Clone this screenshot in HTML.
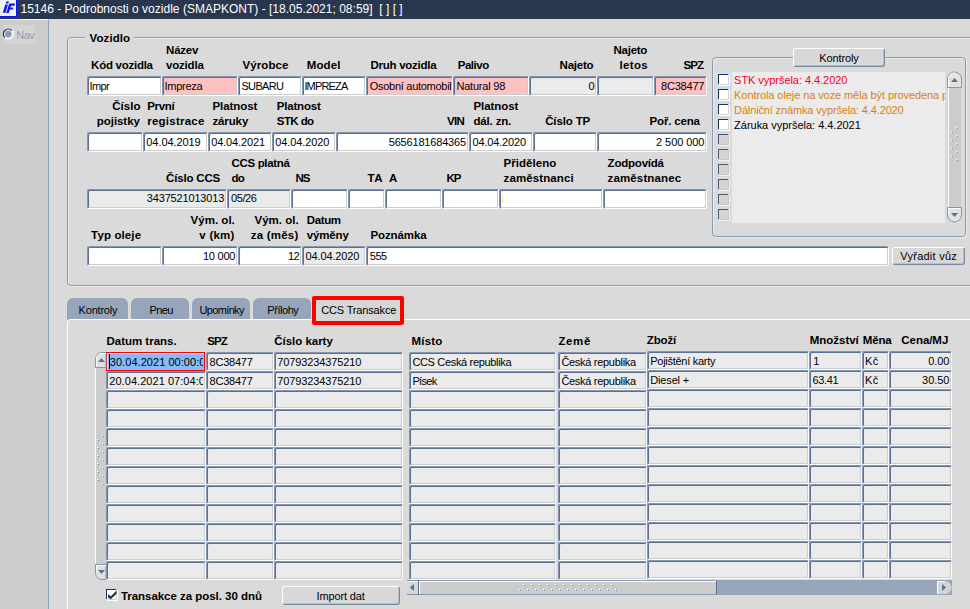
<!DOCTYPE html><html lang="cs"><head><meta charset="utf-8"><title>15146 - Podrobnosti o vozidle</title><style>
*{margin:0;padding:0;box-sizing:border-box}
html,body{width:970px;height:609px;overflow:hidden;background:#dadada;font-family:"Liberation Sans",Arial,sans-serif;font-size:11px;color:#000}
#root{position:relative;width:970px;height:609px;overflow:hidden;background:#dadada}
.abs{position:absolute}
#title{position:absolute;left:0;top:0;width:970px;height:19px;background:#29374e}
#left{position:absolute;left:0;top:19px;width:49px;height:590px;background:#cdcdcd;border-right:1px solid #8fa0ba;border-top:1px solid #f4f4f4}
.t{position:absolute;white-space:pre;height:14px;line-height:14px;font-size:11px}
.b{font-weight:bold;font-size:11.5px}
.w{color:#fff;font-size:12px}
.f,.c{position:absolute;height:20px;border:1px solid;border-color:#8496b2 #fff #fff #8496b2;border-radius:2px;background:#fff;box-shadow:inset 1px 1px 0 #5b7194,inset -1px -1px 0 #cdcdcd}
.g{background:#ebebeb}
.p{background:#ffc0c0}
.c{height:19px;background:#ebebeb}
.btn{position:absolute;border:1px solid;border-color:#fff #7788a4 #7788a4 #fff;border-radius:3px;background:#d8d8d8;box-shadow:inset -1px -1px 0 #b4bfd0}
.frame{position:absolute;border:1px solid #8c9bb5;border-radius:4px;box-shadow:inset 1px 1px 0 #ececec, 1px 1px 0 #ececec}
.tab{position:absolute;top:298px;height:22px;background:#97a5ba;border-radius:6px 6px 0 0}
.cb{position:absolute;width:12px;height:12px;background:linear-gradient(#22334f,#22334f) 0 0/10px 1px no-repeat,linear-gradient(#22334f,#22334f) 0 0/1px 10px no-repeat,linear-gradient(#d2d2d2,#d2d2d2) 10px 1px/1px 10px no-repeat,linear-gradient(#d2d2d2,#d2d2d2) 1px 10px/10px 1px no-repeat,linear-gradient(#fff,#fff) 1px 1px/9px 9px no-repeat,linear-gradient(#fff,#fff) 1px 1px/11px 11px no-repeat}
.cbg{background:linear-gradient(#4a5873,#4a5873) 0 0/10px 1px no-repeat,linear-gradient(#4a5873,#4a5873) 0 0/1px 10px no-repeat,linear-gradient(#c6c6c6,#c6c6c6) 10px 1px/1px 10px no-repeat,linear-gradient(#c6c6c6,#c6c6c6) 1px 10px/10px 1px no-repeat,linear-gradient(#d4d4d4,#d4d4d4) 1px 1px/9px 9px no-repeat,linear-gradient(#f2f2f2,#f2f2f2) 1px 1px/11px 11px no-repeat}
.clip{position:absolute;overflow:hidden}
</style></head><body><div id="root">
<div id="title"><svg class="abs" style="left:0;top:0" width="17" height="17" viewBox="0 0 17 17"><rect width="17" height="17" fill="#0a14f0"/><rect width="16" height="16" fill="#f2f2f2"/><path d="M6.300 1.500h2.600l-.6 2h-2.600z M5.300 4.600h2.600l-2.500 8.200h-2.600z M9.200 3.400h5.900l-.7 2.300h-3.400l-.55 1.800h3l-.65 2.100h-3l-1 3.300h-2.600z" fill="#0a14f0"/></svg></div>
<div id="left"></div>
<div class="abs" style="left:3px;top:25px;width:32px;height:19px;background:#d5d5d5"></div>
<svg class="abs" style="left:0;top:25px" width="20" height="20" viewBox="0 25 20 20"><circle cx="8.300" cy="34" r="5" fill="#dedede" stroke="#fff" stroke-width="1.200"/><path d="M4.760 37.540a5 5 0 0 1 7.080-7.080" fill="none" stroke="#29374e" stroke-width="1.200"/><circle cx="8.300" cy="34" r="3.200" fill="#8a9bb8"/></svg>
<div class="frame" style="left:67px;top:37px;width:910px;height:249px"></div>
<div class="abs" style="left:85px;top:35px;width:49px;height:6px;background:#dadada"></div>
<div class="f " style="left:87px;top:76px;width:75px"></div>
<div class="f p" style="left:162px;top:76px;width:76px"></div>
<div class="f " style="left:238px;top:76px;width:64px"></div>
<div class="f " style="left:302px;top:76px;width:64px"></div>
<div class="f p" style="left:366px;top:76px;width:87px"></div>
<div class="f p" style="left:453px;top:76px;width:76px"></div>
<div class="f g" style="left:529px;top:76px;width:68px"></div>
<div class="f g" style="left:597px;top:76px;width:57px"></div>
<div class="f p" style="left:654px;top:76px;width:53px"></div>
<div class="f " style="left:87px;top:132px;width:56px"></div>
<div class="f " style="left:143px;top:132px;width:65px"></div>
<div class="f " style="left:208px;top:132px;width:64px"></div>
<div class="f " style="left:272px;top:132px;width:64px"></div>
<div class="f " style="left:336px;top:132px;width:133px"></div>
<div class="f " style="left:469px;top:132px;width:64px"></div>
<div class="f " style="left:533px;top:132px;width:64px"></div>
<div class="f " style="left:597px;top:132px;width:110px"></div>
<div class="f g" style="left:87px;top:189px;width:140px"></div>
<div class="f g" style="left:227px;top:189px;width:64px"></div>
<div class="f " style="left:291px;top:189px;width:57px"></div>
<div class="f " style="left:348px;top:189px;width:37px"></div>
<div class="f " style="left:385px;top:189px;width:57px"></div>
<div class="f " style="left:442px;top:189px;width:57px"></div>
<div class="f " style="left:499px;top:189px;width:104px"></div>
<div class="f " style="left:603px;top:189px;width:104px"></div>
<div class="abs" style="left:502px;top:195px;width:1px;height:8px;background:#ffdc8c"></div>
<div class="f " style="left:87px;top:246px;width:75px"></div>
<div class="f " style="left:162px;top:246px;width:76px"></div>
<div class="f " style="left:238px;top:246px;width:64px"></div>
<div class="f g" style="left:302px;top:246px;width:64px"></div>
<div class="f " style="left:366px;top:246px;width:523px"></div>
<div class="btn" style="left:892px;top:247px;width:73px;height:18px"></div>
<div class="frame" style="left:712px;top:57px;width:254px;height:180px"></div>
<div class="btn" style="left:793px;top:48px;width:92px;height:19px"></div>
<div class="abs" style="left:732px;top:72px;width:213px;height:151px;background:#ebebeb"></div>
<div class="abs" style="left:717px;top:72px;width:15px;height:15px;background:#cfe0f6"></div>
<div class="cb " style="left:718px;top:74px"></div>
<div class="cb " style="left:718px;top:89px"></div>
<div class="cb " style="left:718px;top:104px"></div>
<div class="cb " style="left:718px;top:119px"></div>
<div class="cb cbg" style="left:718px;top:134px"></div>
<div class="cb cbg" style="left:718px;top:149px"></div>
<div class="cb cbg" style="left:718px;top:164px"></div>
<div class="cb cbg" style="left:718px;top:179px"></div>
<div class="cb cbg" style="left:718px;top:194px"></div>
<div class="cb cbg" style="left:718px;top:209px"></div>
<svg class="abs" style="left:0;top:0" width="970" height="609" viewBox="0 0 970 609"><rect x="947" y="79" width="14" height="136" fill="#cccccc"/><rect x="947" y="79" width="1" height="136" fill="#d2d2d2"/><rect x="948" y="79" width="1" height="136" fill="#fff"/><path d="M947.500 87.500V79a7 7 0 0 1 14 0v8.500z" fill="#e2e2e2" stroke="#8496b2"/><path d="M948.500 86.500V79a6 6 0 0 1 6-6" fill="none" stroke="#fff"/><path d="M951 82l3.500-4 3.500 4z" fill="#5b7194"/><path d="M947.500 207.500V215a7 7 0 0 0 14 0v-7.500z" fill="#e2e2e2" stroke="#8496b2"/><path d="M948.500 214V208.500h12" fill="none" stroke="#fff"/><path d="M951 213l3.500 4 3.500-4z" fill="#5b7194"/><rect x="956" y="127" width="1" height="1" fill="#fff"/><rect x="957" y="128" width="1" height="1" fill="#7c90b0"/><rect x="956" y="135" width="1" height="1" fill="#fff"/><rect x="957" y="136" width="1" height="1" fill="#7c90b0"/><rect x="956" y="143" width="1" height="1" fill="#fff"/><rect x="957" y="144" width="1" height="1" fill="#7c90b0"/><rect x="956" y="151" width="1" height="1" fill="#fff"/><rect x="957" y="152" width="1" height="1" fill="#7c90b0"/><rect x="956" y="159" width="1" height="1" fill="#fff"/><rect x="957" y="160" width="1" height="1" fill="#7c90b0"/><rect x="951" y="131" width="1" height="1" fill="#fff"/><rect x="952" y="132" width="1" height="1" fill="#7c90b0"/><rect x="951" y="139" width="1" height="1" fill="#fff"/><rect x="952" y="140" width="1" height="1" fill="#7c90b0"/><rect x="951" y="147" width="1" height="1" fill="#fff"/><rect x="952" y="148" width="1" height="1" fill="#7c90b0"/><rect x="951" y="155" width="1" height="1" fill="#fff"/><rect x="952" y="156" width="1" height="1" fill="#7c90b0"/></svg>
<div class="tab" style="left:67px;width:61px"></div>
<div class="tab" style="left:131px;width:58px"></div>
<div class="tab" style="left:192px;width:58px"></div>
<div class="tab" style="left:253px;width:58px"></div>
<div class="abs" style="left:67px;top:319px;width:910px;height:300px;border-top:1px solid #fff;border-left:1px solid #fff;border-radius:4px 0 0 0;background:#dadada"></div>
<div class="abs" style="left:312px;top:296px;width:92px;height:29px;background:#d6d6d6;border:4px solid #ff0000;border-radius:2px"></div>
<div class="abs" style="left:106px;top:352px;width:99px;height:19px;border:1px solid #ff0000;background:#86baf8;box-shadow:inset 1px 1px 0 #d5e8fb"></div>
<div class="abs" style="left:109px;top:354px;width:1px;height:15px;background:#000"></div>
<div class="c" style="left:206px;top:352px;width:68px"></div>
<div class="c" style="left:274px;top:352px;width:129px"></div>
<div class="c" style="left:409px;top:352px;width:147px"></div>
<div class="c" style="left:558px;top:352px;width:89px"></div>
<div class="c" style="left:647px;top:351px;width:162px"></div>
<div class="c" style="left:809px;top:351px;width:53px"></div>
<div class="c" style="left:862px;top:351px;width:27px"></div>
<div class="c" style="left:889px;top:351px;width:63px"></div>
<div class="c" style="left:106px;top:371px;width:100px"></div>
<div class="c" style="left:206px;top:371px;width:68px"></div>
<div class="c" style="left:274px;top:371px;width:129px"></div>
<div class="c" style="left:409px;top:371px;width:147px"></div>
<div class="c" style="left:558px;top:371px;width:89px"></div>
<div class="c" style="left:647px;top:370px;width:162px"></div>
<div class="c" style="left:809px;top:370px;width:53px"></div>
<div class="c" style="left:862px;top:370px;width:27px"></div>
<div class="c" style="left:889px;top:370px;width:63px"></div>
<div class="c" style="left:106px;top:390px;width:100px"></div>
<div class="c" style="left:206px;top:390px;width:68px"></div>
<div class="c" style="left:274px;top:390px;width:129px"></div>
<div class="c" style="left:409px;top:390px;width:147px"></div>
<div class="c" style="left:558px;top:390px;width:89px"></div>
<div class="c" style="left:647px;top:389px;width:162px"></div>
<div class="c" style="left:809px;top:389px;width:53px"></div>
<div class="c" style="left:862px;top:389px;width:27px"></div>
<div class="c" style="left:889px;top:389px;width:63px"></div>
<div class="c" style="left:106px;top:409px;width:100px"></div>
<div class="c" style="left:206px;top:409px;width:68px"></div>
<div class="c" style="left:274px;top:409px;width:129px"></div>
<div class="c" style="left:409px;top:409px;width:147px"></div>
<div class="c" style="left:558px;top:409px;width:89px"></div>
<div class="c" style="left:647px;top:408px;width:162px"></div>
<div class="c" style="left:809px;top:408px;width:53px"></div>
<div class="c" style="left:862px;top:408px;width:27px"></div>
<div class="c" style="left:889px;top:408px;width:63px"></div>
<div class="c" style="left:106px;top:428px;width:100px"></div>
<div class="c" style="left:206px;top:428px;width:68px"></div>
<div class="c" style="left:274px;top:428px;width:129px"></div>
<div class="c" style="left:409px;top:428px;width:147px"></div>
<div class="c" style="left:558px;top:428px;width:89px"></div>
<div class="c" style="left:647px;top:427px;width:162px"></div>
<div class="c" style="left:809px;top:427px;width:53px"></div>
<div class="c" style="left:862px;top:427px;width:27px"></div>
<div class="c" style="left:889px;top:427px;width:63px"></div>
<div class="c" style="left:106px;top:447px;width:100px"></div>
<div class="c" style="left:206px;top:447px;width:68px"></div>
<div class="c" style="left:274px;top:447px;width:129px"></div>
<div class="c" style="left:409px;top:447px;width:147px"></div>
<div class="c" style="left:558px;top:447px;width:89px"></div>
<div class="c" style="left:647px;top:446px;width:162px"></div>
<div class="c" style="left:809px;top:446px;width:53px"></div>
<div class="c" style="left:862px;top:446px;width:27px"></div>
<div class="c" style="left:889px;top:446px;width:63px"></div>
<div class="c" style="left:106px;top:466px;width:100px"></div>
<div class="c" style="left:206px;top:466px;width:68px"></div>
<div class="c" style="left:274px;top:466px;width:129px"></div>
<div class="c" style="left:409px;top:466px;width:147px"></div>
<div class="c" style="left:558px;top:466px;width:89px"></div>
<div class="c" style="left:647px;top:465px;width:162px"></div>
<div class="c" style="left:809px;top:465px;width:53px"></div>
<div class="c" style="left:862px;top:465px;width:27px"></div>
<div class="c" style="left:889px;top:465px;width:63px"></div>
<div class="c" style="left:106px;top:485px;width:100px"></div>
<div class="c" style="left:206px;top:485px;width:68px"></div>
<div class="c" style="left:274px;top:485px;width:129px"></div>
<div class="c" style="left:409px;top:485px;width:147px"></div>
<div class="c" style="left:558px;top:485px;width:89px"></div>
<div class="c" style="left:647px;top:484px;width:162px"></div>
<div class="c" style="left:809px;top:484px;width:53px"></div>
<div class="c" style="left:862px;top:484px;width:27px"></div>
<div class="c" style="left:889px;top:484px;width:63px"></div>
<div class="c" style="left:106px;top:504px;width:100px"></div>
<div class="c" style="left:206px;top:504px;width:68px"></div>
<div class="c" style="left:274px;top:504px;width:129px"></div>
<div class="c" style="left:409px;top:504px;width:147px"></div>
<div class="c" style="left:558px;top:504px;width:89px"></div>
<div class="c" style="left:647px;top:503px;width:162px"></div>
<div class="c" style="left:809px;top:503px;width:53px"></div>
<div class="c" style="left:862px;top:503px;width:27px"></div>
<div class="c" style="left:889px;top:503px;width:63px"></div>
<div class="c" style="left:106px;top:523px;width:100px"></div>
<div class="c" style="left:206px;top:523px;width:68px"></div>
<div class="c" style="left:274px;top:523px;width:129px"></div>
<div class="c" style="left:409px;top:523px;width:147px"></div>
<div class="c" style="left:558px;top:523px;width:89px"></div>
<div class="c" style="left:647px;top:522px;width:162px"></div>
<div class="c" style="left:809px;top:522px;width:53px"></div>
<div class="c" style="left:862px;top:522px;width:27px"></div>
<div class="c" style="left:889px;top:522px;width:63px"></div>
<div class="c" style="left:106px;top:542px;width:100px"></div>
<div class="c" style="left:206px;top:542px;width:68px"></div>
<div class="c" style="left:274px;top:542px;width:129px"></div>
<div class="c" style="left:409px;top:542px;width:147px"></div>
<div class="c" style="left:558px;top:542px;width:89px"></div>
<div class="c" style="left:647px;top:541px;width:162px"></div>
<div class="c" style="left:809px;top:541px;width:53px"></div>
<div class="c" style="left:862px;top:541px;width:27px"></div>
<div class="c" style="left:889px;top:541px;width:63px"></div>
<div class="c" style="left:106px;top:561px;width:100px"></div>
<div class="c" style="left:206px;top:561px;width:68px"></div>
<div class="c" style="left:274px;top:561px;width:129px"></div>
<div class="c" style="left:409px;top:561px;width:147px"></div>
<div class="c" style="left:558px;top:561px;width:89px"></div>
<div class="c" style="left:647px;top:560px;width:162px"></div>
<div class="c" style="left:809px;top:560px;width:53px"></div>
<div class="c" style="left:862px;top:560px;width:27px"></div>
<div class="c" style="left:889px;top:560px;width:63px"></div>
<svg class="abs" style="left:0;top:0" width="970" height="609" viewBox="0 0 970 609"><rect x="95" y="360" width="11" height="212" fill="#cccccc"/><rect x="95" y="360" width="1" height="212" fill="#fff"/><path d="M95.500 367.500V359a6.500 6.500 0 0 1 6.500-6.500h4v15z" fill="#e0e0e0" stroke="#8496b2"/><path d="M96.500 366.500V359a5.500 5.500 0 0 1 5.500-5.500h4" fill="none" stroke="#fff"/><path d="M98 362l3.500-4 3.500 4z" fill="#5b7194"/><path d="M95.500 564.500V573a6.500 6.500 0 0 0 6.500 6.500h4v-15z" fill="#e0e0e0" stroke="#8496b2"/><path d="M96.500 572V565.500h9.500" fill="none" stroke="#fff"/><path d="M98 570l3.500 4 3.500-4z" fill="#5b7194"/><rect x="407" y="580" width="545" height="15" fill="#96a5ba"/><rect x="407" y="580" width="11" height="15" fill="#d6d6d6"/><rect x="407" y="580" width="12" height="1" fill="#7d90ad"/><rect x="407" y="594" width="12" height="1" fill="#7d90ad"/><rect x="407" y="581" width="11" height="1" fill="#fff"/><rect x="418" y="580" width="1" height="15" fill="#5b7194"/><rect x="419" y="580" width="298" height="15" fill="#cccccc"/><rect x="419" y="580" width="298" height="1" fill="#8a9bb5"/><rect x="419" y="581" width="297" height="1" fill="#fff"/><rect x="419" y="582" width="1" height="12" fill="#fff"/><rect x="419" y="594" width="298" height="1" fill="#8497b3"/><rect x="716" y="581" width="1" height="13" fill="#5b7194"/><path d="M410 587.500l4-3.500v7z" fill="#54709a"/><path d="M937 581h8a6.500 6.500 0 0 1 0 13h-8z" fill="#d4d4d4"/><path d="M937.500 594v-12.500h7" fill="none" stroke="#fff"/><path d="M946 587.500l-4-3.500v7z" fill="#54709a"/><rect x="102" y="435" width="1" height="1" fill="#fff"/><rect x="103" y="436" width="1" height="1" fill="#7c90b0"/><rect x="102" y="443" width="1" height="1" fill="#fff"/><rect x="103" y="444" width="1" height="1" fill="#7c90b0"/><rect x="102" y="451" width="1" height="1" fill="#fff"/><rect x="103" y="452" width="1" height="1" fill="#7c90b0"/><rect x="102" y="459" width="1" height="1" fill="#fff"/><rect x="103" y="460" width="1" height="1" fill="#7c90b0"/><rect x="102" y="467" width="1" height="1" fill="#fff"/><rect x="103" y="468" width="1" height="1" fill="#7c90b0"/><rect x="102" y="475" width="1" height="1" fill="#fff"/><rect x="103" y="476" width="1" height="1" fill="#7c90b0"/><rect x="102" y="483" width="1" height="1" fill="#fff"/><rect x="103" y="484" width="1" height="1" fill="#7c90b0"/><rect x="97" y="439" width="1" height="1" fill="#fff"/><rect x="98" y="440" width="1" height="1" fill="#7c90b0"/><rect x="97" y="447" width="1" height="1" fill="#fff"/><rect x="98" y="448" width="1" height="1" fill="#7c90b0"/><rect x="97" y="455" width="1" height="1" fill="#fff"/><rect x="98" y="456" width="1" height="1" fill="#7c90b0"/><rect x="97" y="463" width="1" height="1" fill="#fff"/><rect x="98" y="464" width="1" height="1" fill="#7c90b0"/><rect x="97" y="471" width="1" height="1" fill="#fff"/><rect x="98" y="472" width="1" height="1" fill="#7c90b0"/><rect x="97" y="479" width="1" height="1" fill="#fff"/><rect x="98" y="480" width="1" height="1" fill="#7c90b0"/><rect x="523" y="584" width="1" height="1" fill="#fff"/><rect x="524" y="585" width="1" height="1" fill="#7c90b0"/><rect x="531" y="584" width="1" height="1" fill="#fff"/><rect x="532" y="585" width="1" height="1" fill="#7c90b0"/><rect x="539" y="584" width="1" height="1" fill="#fff"/><rect x="540" y="585" width="1" height="1" fill="#7c90b0"/><rect x="547" y="584" width="1" height="1" fill="#fff"/><rect x="548" y="585" width="1" height="1" fill="#7c90b0"/><rect x="555" y="584" width="1" height="1" fill="#fff"/><rect x="556" y="585" width="1" height="1" fill="#7c90b0"/><rect x="563" y="584" width="1" height="1" fill="#fff"/><rect x="564" y="585" width="1" height="1" fill="#7c90b0"/><rect x="571" y="584" width="1" height="1" fill="#fff"/><rect x="572" y="585" width="1" height="1" fill="#7c90b0"/><rect x="579" y="584" width="1" height="1" fill="#fff"/><rect x="580" y="585" width="1" height="1" fill="#7c90b0"/><rect x="587" y="584" width="1" height="1" fill="#fff"/><rect x="588" y="585" width="1" height="1" fill="#7c90b0"/><rect x="595" y="584" width="1" height="1" fill="#fff"/><rect x="596" y="585" width="1" height="1" fill="#7c90b0"/><rect x="603" y="584" width="1" height="1" fill="#fff"/><rect x="604" y="585" width="1" height="1" fill="#7c90b0"/><rect x="611" y="584" width="1" height="1" fill="#fff"/><rect x="612" y="585" width="1" height="1" fill="#7c90b0"/><rect x="519" y="589" width="1" height="1" fill="#fff"/><rect x="520" y="590" width="1" height="1" fill="#7c90b0"/><rect x="527" y="589" width="1" height="1" fill="#fff"/><rect x="528" y="590" width="1" height="1" fill="#7c90b0"/><rect x="535" y="589" width="1" height="1" fill="#fff"/><rect x="536" y="590" width="1" height="1" fill="#7c90b0"/><rect x="543" y="589" width="1" height="1" fill="#fff"/><rect x="544" y="590" width="1" height="1" fill="#7c90b0"/><rect x="551" y="589" width="1" height="1" fill="#fff"/><rect x="552" y="590" width="1" height="1" fill="#7c90b0"/><rect x="559" y="589" width="1" height="1" fill="#fff"/><rect x="560" y="590" width="1" height="1" fill="#7c90b0"/><rect x="567" y="589" width="1" height="1" fill="#fff"/><rect x="568" y="590" width="1" height="1" fill="#7c90b0"/><rect x="575" y="589" width="1" height="1" fill="#fff"/><rect x="576" y="590" width="1" height="1" fill="#7c90b0"/><rect x="583" y="589" width="1" height="1" fill="#fff"/><rect x="584" y="590" width="1" height="1" fill="#7c90b0"/><rect x="591" y="589" width="1" height="1" fill="#fff"/><rect x="592" y="590" width="1" height="1" fill="#7c90b0"/><rect x="599" y="589" width="1" height="1" fill="#fff"/><rect x="600" y="590" width="1" height="1" fill="#7c90b0"/><rect x="607" y="589" width="1" height="1" fill="#fff"/><rect x="608" y="590" width="1" height="1" fill="#7c90b0"/><rect x="615" y="589" width="1" height="1" fill="#fff"/><rect x="616" y="590" width="1" height="1" fill="#7c90b0"/></svg>
<div class="cb" style="left:106px;top:589px"></div>
<svg class="abs" style="left:100px;top:585px" width="24" height="20" viewBox="100 585 24 20"><path d="M108 594.300V597.400L110.800 599.300L116.600 593.800V590.600L110.800 596.200z" fill="#22334f"/></svg>
<div class="btn" style="left:282px;top:586px;width:118px;height:19px"></div>
<div class="t w" style="left:20.50px;top:1.84px;letter-spacing:0.009px">15146 - Podrobnosti o vozidle (SMAPKONT) - [18.05.2021; 08:59]  [ ] [ ]</div>
<div class="t" style="left:16.20px;top:28.19px;letter-spacing:-0.481px;color:#8a9bc0">Nav</div>
<div class="t b" style="left:89.60px;top:31.02px;letter-spacing:0.082px">Vozidlo</div>
<div class="t b" style="left:91.10px;top:58.02px;letter-spacing:-0.263px">Kód vozidla</div>
<div class="t b" style="left:166.10px;top:43.02px;letter-spacing:-0.262px">Název</div>
<div class="t b" style="left:166.10px;top:58.02px;letter-spacing:-0.214px">vozidla</div>
<div class="t b" style="left:242.60px;top:58.02px;letter-spacing:0.069px">Výrobce</div>
<div class="t b" style="left:306.70px;top:58.02px;letter-spacing:0.119px">Model</div>
<div class="t b" style="left:370.50px;top:58.02px;letter-spacing:-0.265px">Druh vozidla</div>
<div class="t b" style="left:457.70px;top:58.02px;letter-spacing:-0.470px">Palivo</div>
<div class="t b" style="left:559.60px;top:58.02px;letter-spacing:-0.224px">Najeto</div>
<div class="t b" style="left:613.60px;top:43.02px;letter-spacing:-0.284px">Najeto</div>
<div class="t b" style="left:619.50px;top:58.02px;letter-spacing:0.339px">letos</div>
<div class="t b" style="left:683.40px;top:58.02px;letter-spacing:-0.900px">SPZ</div>
<div class="t" style="left:89.50px;top:79.19px;letter-spacing:-0.646px">Impr</div>
<div class="t" style="left:164.40px;top:79.19px;letter-spacing:-0.236px">Impreza</div>
<div class="t" style="left:241.40px;top:79.19px;letter-spacing:-0.640px">SUBARU</div>
<div class="t" style="left:304.40px;top:79.19px;letter-spacing:-0.843px">IMPREZA</div>
<div class="t" style="left:456.40px;top:79.19px;letter-spacing:-0.193px">Natural 98</div>
<div class="t" style="left:588.60px;top:79.19px;letter-spacing:-0.500px">0</div>
<div class="t" style="left:661.10px;top:79.19px;letter-spacing:-0.222px">8C38477</div>
<div class="t b" style="left:112.20px;top:99.02px;letter-spacing:0.052px">Číslo</div>
<div class="t b" style="left:96.80px;top:114.02px;letter-spacing:-0.052px">pojistky</div>
<div class="t b" style="left:147.30px;top:99.02px;letter-spacing:-0.367px">První</div>
<div class="t b" style="left:147.30px;top:114.02px;letter-spacing:0.224px">registrace</div>
<div class="t b" style="left:212.40px;top:99.02px;letter-spacing:-0.048px">Platnost</div>
<div class="t b" style="left:212.40px;top:114.02px;letter-spacing:-0.108px">záruky</div>
<div class="t b" style="left:276.80px;top:99.02px;letter-spacing:-0.191px">Platnost</div>
<div class="t b" style="left:276.80px;top:114.02px;letter-spacing:-0.584px">STK do</div>
<div class="t b" style="left:446.90px;top:114.02px;letter-spacing:-0.583px">VIN</div>
<div class="t b" style="left:473.40px;top:99.02px;letter-spacing:-0.062px">Platnost</div>
<div class="t b" style="left:473.40px;top:114.02px;letter-spacing:-0.154px">dál. zn.</div>
<div class="t b" style="left:545.20px;top:114.02px;letter-spacing:-0.134px">Číslo TP</div>
<div class="t b" style="left:649.50px;top:114.02px;letter-spacing:-0.160px">Poř. cena</div>
<div class="t" style="left:146.30px;top:135.19px;letter-spacing:-0.071px">04.04.2019</div>
<div class="t" style="left:211.20px;top:135.19px;letter-spacing:-0.126px">04.04.2021</div>
<div class="t" style="left:275.30px;top:135.19px;letter-spacing:-0.115px">04.04.2020</div>
<div class="t" style="left:388.70px;top:135.19px;letter-spacing:-0.176px">5656181684365</div>
<div class="t" style="left:472.60px;top:135.19px;letter-spacing:-0.182px">04.04.2020</div>
<div class="t" style="left:656.10px;top:135.19px;letter-spacing:-0.077px">2 500 000</div>
<div class="t b" style="left:166.10px;top:171.02px;letter-spacing:-0.190px">Číslo CCS</div>
<div class="t b" style="left:231.50px;top:156.02px;letter-spacing:-0.327px">CCS platná</div>
<div class="t b" style="left:231.50px;top:171.02px;letter-spacing:-0.825px">do</div>
<div class="t b" style="left:295.40px;top:171.02px;letter-spacing:-0.900px">NS</div>
<div class="t b" style="left:367.50px;top:171.02px;letter-spacing:0.529px">TA</div>
<div class="t b" style="left:389.00px;top:171.02px;letter-spacing:0.500px">A</div>
<div class="t b" style="left:446.40px;top:171.02px;letter-spacing:-0.900px">KP</div>
<div class="t b" style="left:503.60px;top:156.02px;letter-spacing:0.028px">Přiděleno</div>
<div class="t b" style="left:503.60px;top:171.02px;letter-spacing:0.107px">zaměstnanci</div>
<div class="t b" style="left:607.60px;top:156.02px;letter-spacing:-0.217px">Zodpovídá</div>
<div class="t b" style="left:607.60px;top:171.02px;letter-spacing:0.127px">zaměstnanec</div>
<div class="t" style="left:146.80px;top:191.19px;letter-spacing:-0.168px">3437521013013</div>
<div class="t" style="left:231.00px;top:191.19px;letter-spacing:-0.402px">05/26</div>
<div class="t b" style="left:91.10px;top:228.02px;letter-spacing:0.125px">Typ oleje</div>
<div class="t b" style="left:190.60px;top:213.02px;letter-spacing:0.014px">Vým. ol.</div>
<div class="t b" style="left:199.30px;top:228.02px;letter-spacing:0.252px">v (km)</div>
<div class="t b" style="left:254.50px;top:213.02px;letter-spacing:-0.000px">Vým. ol.</div>
<div class="t b" style="left:250.80px;top:228.02px;letter-spacing:0.202px">za (měs)</div>
<div class="t b" style="left:306.80px;top:213.02px;letter-spacing:-0.389px">Datum</div>
<div class="t b" style="left:306.80px;top:228.02px;letter-spacing:-0.147px">výměny</div>
<div class="t b" style="left:370.40px;top:228.02px;letter-spacing:-0.098px">Poznámka</div>
<div class="t" style="left:203.00px;top:249.19px;letter-spacing:-0.245px">10 000</div>
<div class="t" style="left:287.90px;top:249.19px;letter-spacing:-0.418px">12</div>
<div class="t" style="left:305.60px;top:249.19px;letter-spacing:-0.148px">04.04.2020</div>
<div class="t" style="left:369.70px;top:249.19px;letter-spacing:-0.418px">555</div>
<div class="t" style="left:900.30px;top:249.19px;letter-spacing:0.250px">Vyřadit vůz</div>
<div class="t" style="left:819.20px;top:51.19px;letter-spacing:-0.108px">Kontroly</div>
<div class="t" style="left:734.10px;top:73.19px;letter-spacing:-0.049px;color:#f5001d">STK vypršela: 4.4.2020</div>
<div class="t" style="left:734.10px;top:103.19px;letter-spacing:-0.141px;color:#d98014">Dálniční známka vypršela: 4.4.2020</div>
<div class="t" style="left:734.10px;top:118.19px;letter-spacing:-0.019px;color:#000">Záruka vypršela: 4.4.2021</div>
<div class="t" style="left:78.60px;top:303.19px;letter-spacing:-0.208px">Kontroly</div>
<div class="t" style="left:149.60px;top:303.19px;letter-spacing:-0.657px">Pneu</div>
<div class="t" style="left:199.40px;top:303.19px;letter-spacing:-0.631px">Upomínky</div>
<div class="t" style="left:267.30px;top:303.19px;letter-spacing:-0.456px">Přílohy</div>
<div class="t" style="left:321.20px;top:303.19px;letter-spacing:-0.151px">CCS Transakce</div>
<div class="t b" style="left:106.50px;top:334.02px;letter-spacing:-0.018px">Datum trans.</div>
<div class="t b" style="left:207.30px;top:334.02px;letter-spacing:-0.900px">SPZ</div>
<div class="t b" style="left:274.30px;top:334.02px;letter-spacing:-0.031px">Číslo karty</div>
<div class="t b" style="left:411.60px;top:334.02px;letter-spacing:0.150px">Místo</div>
<div class="t b" style="left:558.40px;top:334.02px;letter-spacing:0.651px">Země</div>
<div class="t b" style="left:646.80px;top:333.02px;letter-spacing:-0.131px">Zboží</div>
<div class="t b" style="left:809.70px;top:333.02px;letter-spacing:-0.014px">Množství</div>
<div class="t b" style="left:862.70px;top:333.02px;letter-spacing:-0.133px">Měna</div>
<div class="t b" style="left:901.30px;top:333.02px;letter-spacing:-0.049px">Cena/MJ</div>
<div class="t" style="left:209.60px;top:355.19px;letter-spacing:-0.239px">8C38477</div>
<div class="t" style="left:209.60px;top:374.19px;letter-spacing:-0.239px">8C38477</div>
<div class="t" style="left:277.30px;top:355.19px;letter-spacing:-0.118px">70793234375210</div>
<div class="t" style="left:277.30px;top:374.19px;letter-spacing:-0.118px">70793234375210</div>
<div class="t" style="left:412.40px;top:355.19px;letter-spacing:-0.330px">CCS Ceská republika</div>
<div class="t" style="left:412.40px;top:374.19px;letter-spacing:-0.678px">Písek</div>
<div class="t" style="left:561.40px;top:355.19px;letter-spacing:-0.297px">Česká republika</div>
<div class="t" style="left:561.40px;top:374.19px;letter-spacing:-0.297px">Česká republika</div>
<div class="t" style="left:650.30px;top:354.19px;letter-spacing:-0.277px">Pojištění karty</div>
<div class="t" style="left:650.30px;top:373.19px;letter-spacing:-0.160px">Diesel +</div>
<div class="t" style="left:813.20px;top:354.19px;letter-spacing:-0.900px">1</div>
<div class="t" style="left:812.40px;top:373.19px;letter-spacing:-0.327px">63.41</div>
<div class="t" style="left:865.10px;top:354.19px;letter-spacing:0.263px">Kč</div>
<div class="t" style="left:865.10px;top:373.19px;letter-spacing:0.263px">Kč</div>
<div class="t" style="left:928.20px;top:354.19px;letter-spacing:-0.097px">0.00</div>
<div class="t" style="left:922.10px;top:373.19px;letter-spacing:-0.077px">30.50</div>
<div class="t b" style="left:120.90px;top:589.02px;letter-spacing:-0.036px">Transakce za posl. 30 dnů</div>
<div class="t" style="left:316.50px;top:589.19px;letter-spacing:-0.141px">Import dat</div>
<div class="clip" style="left:108px;top:352px;width:95px;height:40px"><div class="t" style="left:1.80px;top:3.19px;letter-spacing:0.044px">30.04.2021 00:00:00</div><div class="t" style="left:1.30px;top:22.19px;letter-spacing:0.044px">20.04.2021 07:04:00</div></div>
<div class="clip" style="left:732px;top:72px;width:213px;height:151px"><div class="t" style="left:2.10px;top:16.19px;letter-spacing:-0.085px;color:#d98014">Kontrola oleje na voze měla být provedena p</div></div>
<div class="clip" style="left:368px;top:78px;width:83.5px;height:16px"><div class="t" style="left:1.80px;top:1.19px;letter-spacing:-0.285px">Osobní automobil</div></div></div></body></html>
